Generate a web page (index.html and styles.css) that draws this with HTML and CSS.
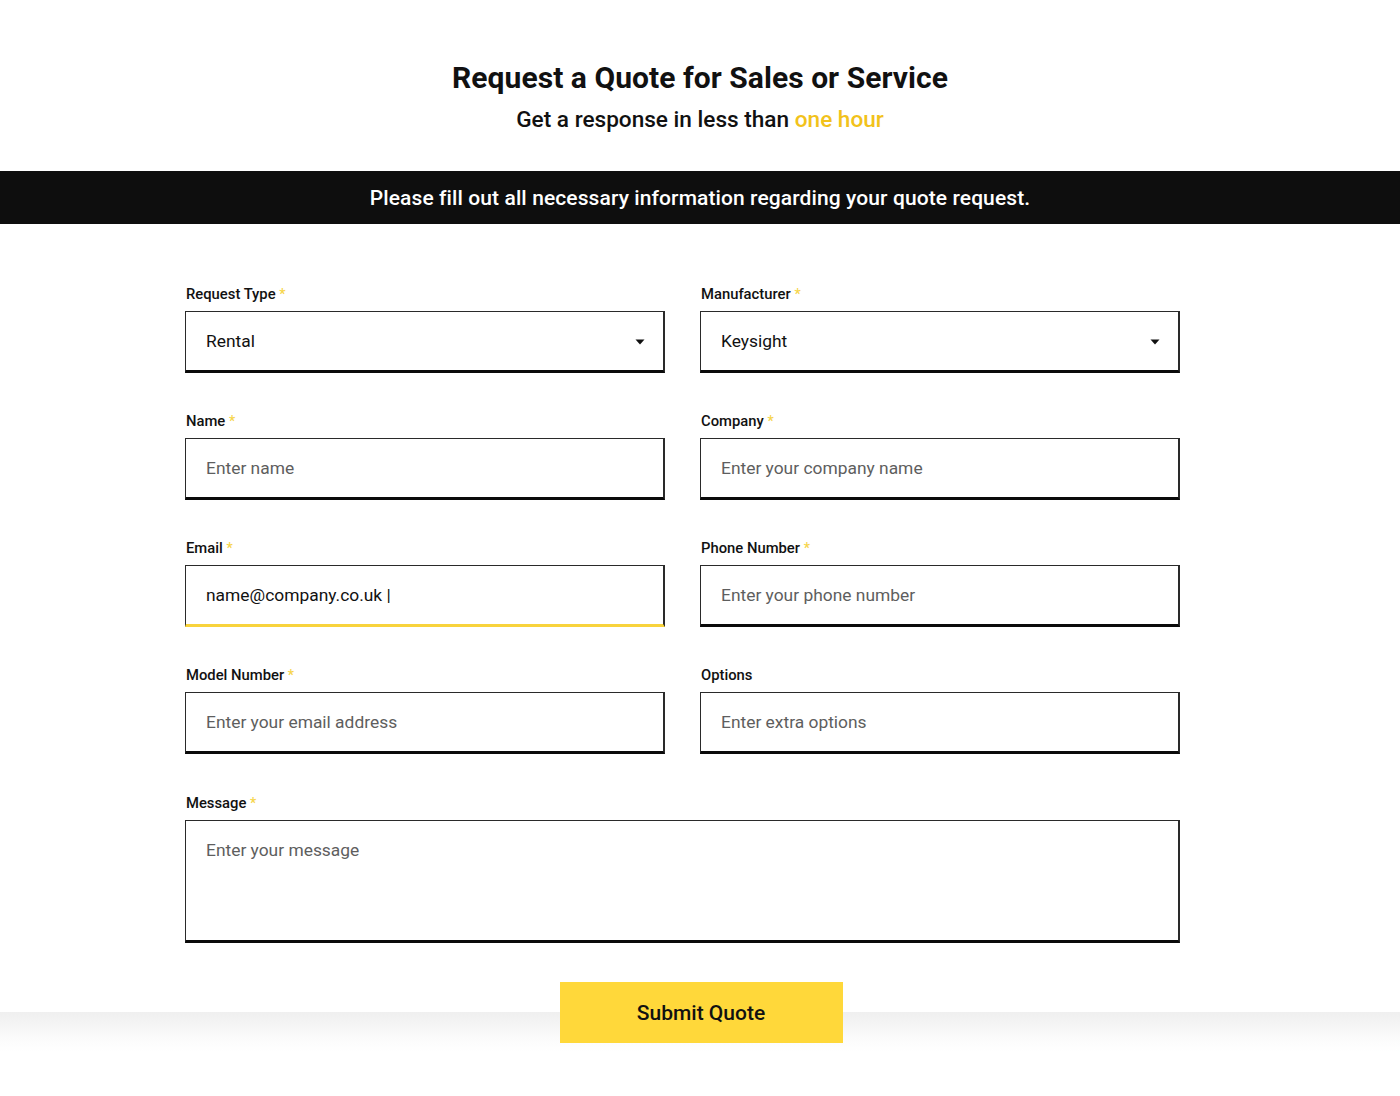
FILE: index.html
```html
<!DOCTYPE html>
<html lang="en">
<head>
<meta charset="utf-8">
<title>Request a Quote</title>
<link rel="stylesheet" href="styles.css">
</head>
<body>
<header class="hero">
  <h1 class="hero-title">Request a Quote for Sales or Service</h1>
  <p class="hero-sub">Get a response in less than <span class="accent">one hour</span></p>
</header>
<div class="notice">Please fill out all necessary information regarding your quote request.</div>
<section class="form-section">
  <form class="quote-form">
    <div class="field">
      <label class="label">Request Type <span class="req">*</span></label>
      <div class="control select">
        <span class="value">Rental</span>
        <svg class="caret" width="10" height="6" viewBox="0 0 10 6"><path d="M0.5 0.5 L9.5 0.5 L5 5.5 Z" fill="#111"/></svg>
      </div>
    </div>
    <div class="field">
      <label class="label">Manufacturer <span class="req">*</span></label>
      <div class="control select">
        <span class="value">Keysight</span>
        <svg class="caret" width="10" height="6" viewBox="0 0 10 6"><path d="M0.5 0.5 L9.5 0.5 L5 5.5 Z" fill="#111"/></svg>
      </div>
    </div>
    <div class="field">
      <label class="label">Name <span class="req">*</span></label>
      <div class="control"><span class="placeholder">Enter name</span></div>
    </div>
    <div class="field">
      <label class="label">Company <span class="req">*</span></label>
      <div class="control"><span class="placeholder">Enter your company name</span></div>
    </div>
    <div class="field">
      <label class="label">Email <span class="req">*</span></label>
      <div class="control focused"><span class="value">name@company.co.uk |</span></div>
    </div>
    <div class="field">
      <label class="label">Phone Number <span class="req">*</span></label>
      <div class="control"><span class="placeholder">Enter your phone number</span></div>
    </div>
    <div class="field">
      <label class="label">Model Number <span class="req">*</span></label>
      <div class="control"><span class="placeholder">Enter your email address</span></div>
    </div>
    <div class="field">
      <label class="label">Options</label>
      <div class="control"><span class="placeholder">Enter extra options</span></div>
    </div>
    <div class="field wide">
      <label class="label">Message <span class="req">*</span></label>
      <div class="control textarea"><span class="placeholder">Enter your message</span></div>
    </div>
  </form>
</section>
<footer class="footer">
  <button class="submit" type="button">Submit Quote</button>
</footer>
</body>
</html>
```

FILE: styles.css
```css
* { box-sizing: border-box; }
html, body { margin: 0; padding: 0; background: #fff; }
body {
  font-family: Roboto, "Noto Sans", "Liberation Sans", sans-serif;
  color: #111;
  width: 1400px;
}
.hero {
  padding-top: 60px;
  padding-bottom: 37px;
  text-align: center;
}
.hero-title {
  margin: 0;
  font-size: 30px;
  line-height: 36px;
  font-weight: 700;
  color: #111;
  letter-spacing: 0.05px;
}
.hero-sub {
  margin: 10px 0 0;
  font-size: 22.6px;
  line-height: 28px;
  font-weight: 500;
  color: #111;
}
.accent { color: #f2c21b; }
.notice {
  background: #0e0e0e;
  color: #fff;
  height: 53px;
  line-height: 55px;
  text-align: center;
  font-size: 21px;
  font-weight: 500;
  letter-spacing: 0.1px;
}
.form-section {
  padding: 60px 0 69px 185px;
  background: #fff;
}
.quote-form {
  width: 995px;
  display: grid;
  grid-template-columns: 480px 480px;
  column-gap: 35px;
  row-gap: 38px;
}
.field.wide { grid-column: 1 / span 2; margin-top: 1px; }
.label {
  display: block;
  height: 19px;
  padding-top: 1px;
  line-height: 18px;
  font-size: 14.8px;
  font-weight: 500;
  color: #111;
  margin-bottom: 8px;
  padding-left: 1px;
}
.req { color: #f6d54a; font-size: 14px; }
.control {
  height: 62px;
  border: 1px solid #2a2a2a;
  border-right-width: 2px;
  border-bottom: 3px solid #0a0a0a;
  padding: 0 18px 0 20px;
  display: flex;
  align-items: center;
  font-size: 17.4px;
  background: #fff;
}
.control.focused { border-bottom-color: #f8d33c; }
.control.select { justify-content: space-between; }
.caret { display: block; margin-top: 1px; }
.control.textarea {
  height: 123px;
  align-items: flex-start;
  padding-top: 19px;
}
.value { color: #111; }
.placeholder { color: #5e5e5e; }
.footer {
  height: 84px;
  background: linear-gradient(#efefef, #fbfbfb 26px, #fff 40px);
  display: flex;
  justify-content: center;
}
.submit {
  margin-top: -30px;
  margin-left: 2px;
  width: 283px;
  height: 61px;
  background: #ffd83a;
  border: 0;
  font-family: Roboto, "Noto Sans", "Liberation Sans", sans-serif;
  font-size: 21px;
  font-weight: 500;
  color: #111;
  cursor: pointer;
}
```
